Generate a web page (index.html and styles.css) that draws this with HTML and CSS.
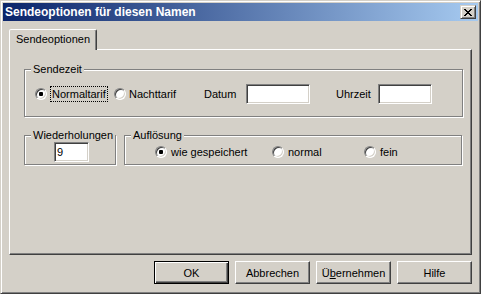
FILE: index.html
```html
<!DOCTYPE html>
<html lang="de">
<head>
  <meta charset="UTF-8">
  <meta name="viewport" content="width=device-width, initial-scale=1.0">
  <title>Sendeoptionen für diesen Namen</title>
  <link rel="stylesheet" href="styles.css">
</head>
<body>
  <div class="window">
    <div class="titlebar">
      <span class="title">Sendeoptionen für diesen Namen</span>
      <button class="close" aria-label="Schließen">
        <svg width="8" height="7" viewBox="0 0 8 7"><path d="M0 0h2v1H0zM6 0h2v1H6zM1 1h2v1H1zM5 1h2v1H5zM2 2h4v1H2zM3 3h2v1H3zM2 4h4v1H2zM1 5h2v1H1zM5 5h2v1H5zM0 6h2v1H0zM6 6h2v1H6z"/></svg>
      </button>
    </div>

    <div class="tabs">
      <div class="tab">Sendeoptionen</div>
    </div>

    <div class="panel">
      <fieldset class="group group-time">
        <legend>Sendezeit</legend>
        <div class="row">
          <label class="opt opt-normal"><span class="radio checked"></span><span class="text focus">Normaltarif</span></label>
          <label class="opt opt-night"><span class="radio"></span><span class="text">Nachttarif</span></label>
          <span class="field-label">Datum</span>
          <input class="edit edit-date" type="text">
          <span class="field-label field-time">Uhrzeit</span>
          <input class="edit edit-time" type="text">
        </div>
      </fieldset>

      <div class="group-row">
        <fieldset class="group group-repeat">
          <legend>Wiederholungen</legend>
          <input class="edit edit-repeat" type="text" value="9">
        </fieldset>
        <fieldset class="group group-res">
          <legend>Auflösung</legend>
          <div class="row">
            <label class="opt opt-saved"><span class="radio checked"></span><span class="text">wie gespeichert</span></label>
            <label class="opt opt-plain"><span class="radio"></span><span class="text">normal</span></label>
            <label class="opt"><span class="radio"></span><span class="text">fein</span></label>
          </div>
        </fieldset>
      </div>
    </div>

    <div class="buttons">
      <button class="btn btn-default">OK</button>
      <button class="btn">Abbrechen</button>
      <button class="btn">Ü<u>b</u>ernehmen</button>
      <button class="btn">Hilfe</button>
    </div>
  </div>
</body>
</html>
```

FILE: styles.css
```css
body {
  margin: 0;
  background: #d4d0c8;
  font-family: "Liberation Sans", Arial, sans-serif;
  font-size: 11px;
  color: #000;
}
.window {
  width: 481px;
  height: 294px;
  box-sizing: border-box;
  padding: 2px;
  border: 1px solid;
  border-color: #d4d0c8 #404040 #404040 #d4d0c8;
  box-shadow: inset 1px 1px #fff, inset -1px -1px #808080;
  background: #d4d0c8;
}
.titlebar {
  height: 18px;
  display: flex;
  align-items: center;
  justify-content: space-between;
  padding: 0 2px;
  background: linear-gradient(to right, #0a246a, #a6caf0);
}
.title {
  color: #fff;
  font-size: 12px;
  font-weight: bold;
  line-height: 18px;
}
.close {
  width: 16px;
  height: 14px;
  box-sizing: border-box;
  padding: 0;
  display: flex;
  align-items: center;
  justify-content: center;
  border: 1px solid;
  border-color: #d4d0c8 #404040 #404040 #d4d0c8;
  box-shadow: inset 1px 1px #fff, inset -1px -1px #808080;
  background: #d4d0c8;
}
.tabs {
  display: flex;
  margin: 8px 0 -1px 6px;
}
.tab {
  position: relative;
  width: 88px;
  height: 21px;
  box-sizing: border-box;
  padding-top: 2px;
  border: 1px solid;
  border-bottom: none;
  border-color: #fff #404040 transparent #fff;
  border-radius: 2px 2px 0 0;
  box-shadow: inset -1px 0 #808080;
  background: #d4d0c8;
  text-align: center;
  line-height: 14px;
}
.panel {
  width: 463px;
  height: 206px;
  box-sizing: border-box;
  margin-left: 6px;
  padding: 13px 0 0 14px;
  border: 1px solid;
  border-color: #fff #404040 #404040 #fff;
  box-shadow: inset -1px -1px #808080;
}

/* group boxes */
.group {
  margin: 0;
  padding: 0;
  min-width: 0;
  box-sizing: border-box;
  border: 1px solid #808080;
  box-shadow: inset 1px 1px #fff, 1px 1px #fff;
}
.group legend {
  margin-left: 6px;
  padding: 0 2px;
  line-height: 13px;
  background: #d4d0c8;
}
.group-time {
  width: 439px;
}
.group-time .row {
  margin: 8px 0 12px 10px;
}
.group-row {
  display: flex;
  gap: 8px;
  margin-top: 12px;
}
.group-repeat {
  width: 92px;
}
.group-res {
  width: 338px;
}
.group-res .row {
  margin: 0 0 2px 30px;
}
.group-res .text {
  margin-left: 4px;
}
.row {
  display: flex;
  align-items: center;
  height: 20px;
}

/* radio buttons */
.opt {
  display: flex;
  align-items: center;
}
.opt-normal { width: 79px; }
.opt-night { width: 90px; }
.opt-saved { width: 117px; }
.opt-plain { width: 92px; }
.radio {
  width: 12px;
  height: 12px;
  flex-shrink: 0;
  box-sizing: border-box;
  display: flex;
  align-items: center;
  justify-content: center;
  border: 1px solid;
  border-color: #808080 #fff #fff #808080;
  border-radius: 50%;
  box-shadow: inset 1px 1px #404040, inset -1px -1px #d4d0c8;
  background: #fff;
}
.radio.checked::after {
  content: "";
  width: 4px;
  height: 4px;
  border-radius: 1px;
  background: #000;
}
.text {
  margin-left: 3px;
  line-height: 14px;
}
.focus {
  padding: 0 1px;
  border: 1px dotted #000;
}

/* edit fields */
.field-label { width: 42px; }
.field-time { margin-left: 26px; }
.edit {
  height: 20px;
  box-sizing: border-box;
  margin: 0;
  padding: 0 2px;
  border: 1px solid;
  border-color: #808080 #fff #fff #808080;
  box-shadow: inset 1px 1px #404040, inset -1px -1px #d4d0c8;
  background: #fff;
  font: inherit;
  color: #000;
  outline: none;
}
.edit-date { width: 64px; }
.edit-time { width: 54px; }
.edit-repeat {
  display: block;
  width: 35px;
  margin: 0 0 2px 29px;
}

/* dialog buttons */
.buttons {
  display: flex;
  justify-content: flex-end;
  gap: 6px;
  margin: 6px 6px 0 0;
}
.btn {
  width: 75px;
  height: 23px;
  box-sizing: border-box;
  padding: 0;
  border: 1px solid;
  border-color: #fff #404040 #404040 #fff;
  box-shadow: inset -1px -1px #808080;
  background: #d4d0c8;
  font: inherit;
  color: #000;
}
.btn-default {
  border-color: #000;
  box-shadow: inset 1px 1px #fff, inset -1px -1px #404040, inset -2px -2px #808080;
}
```
